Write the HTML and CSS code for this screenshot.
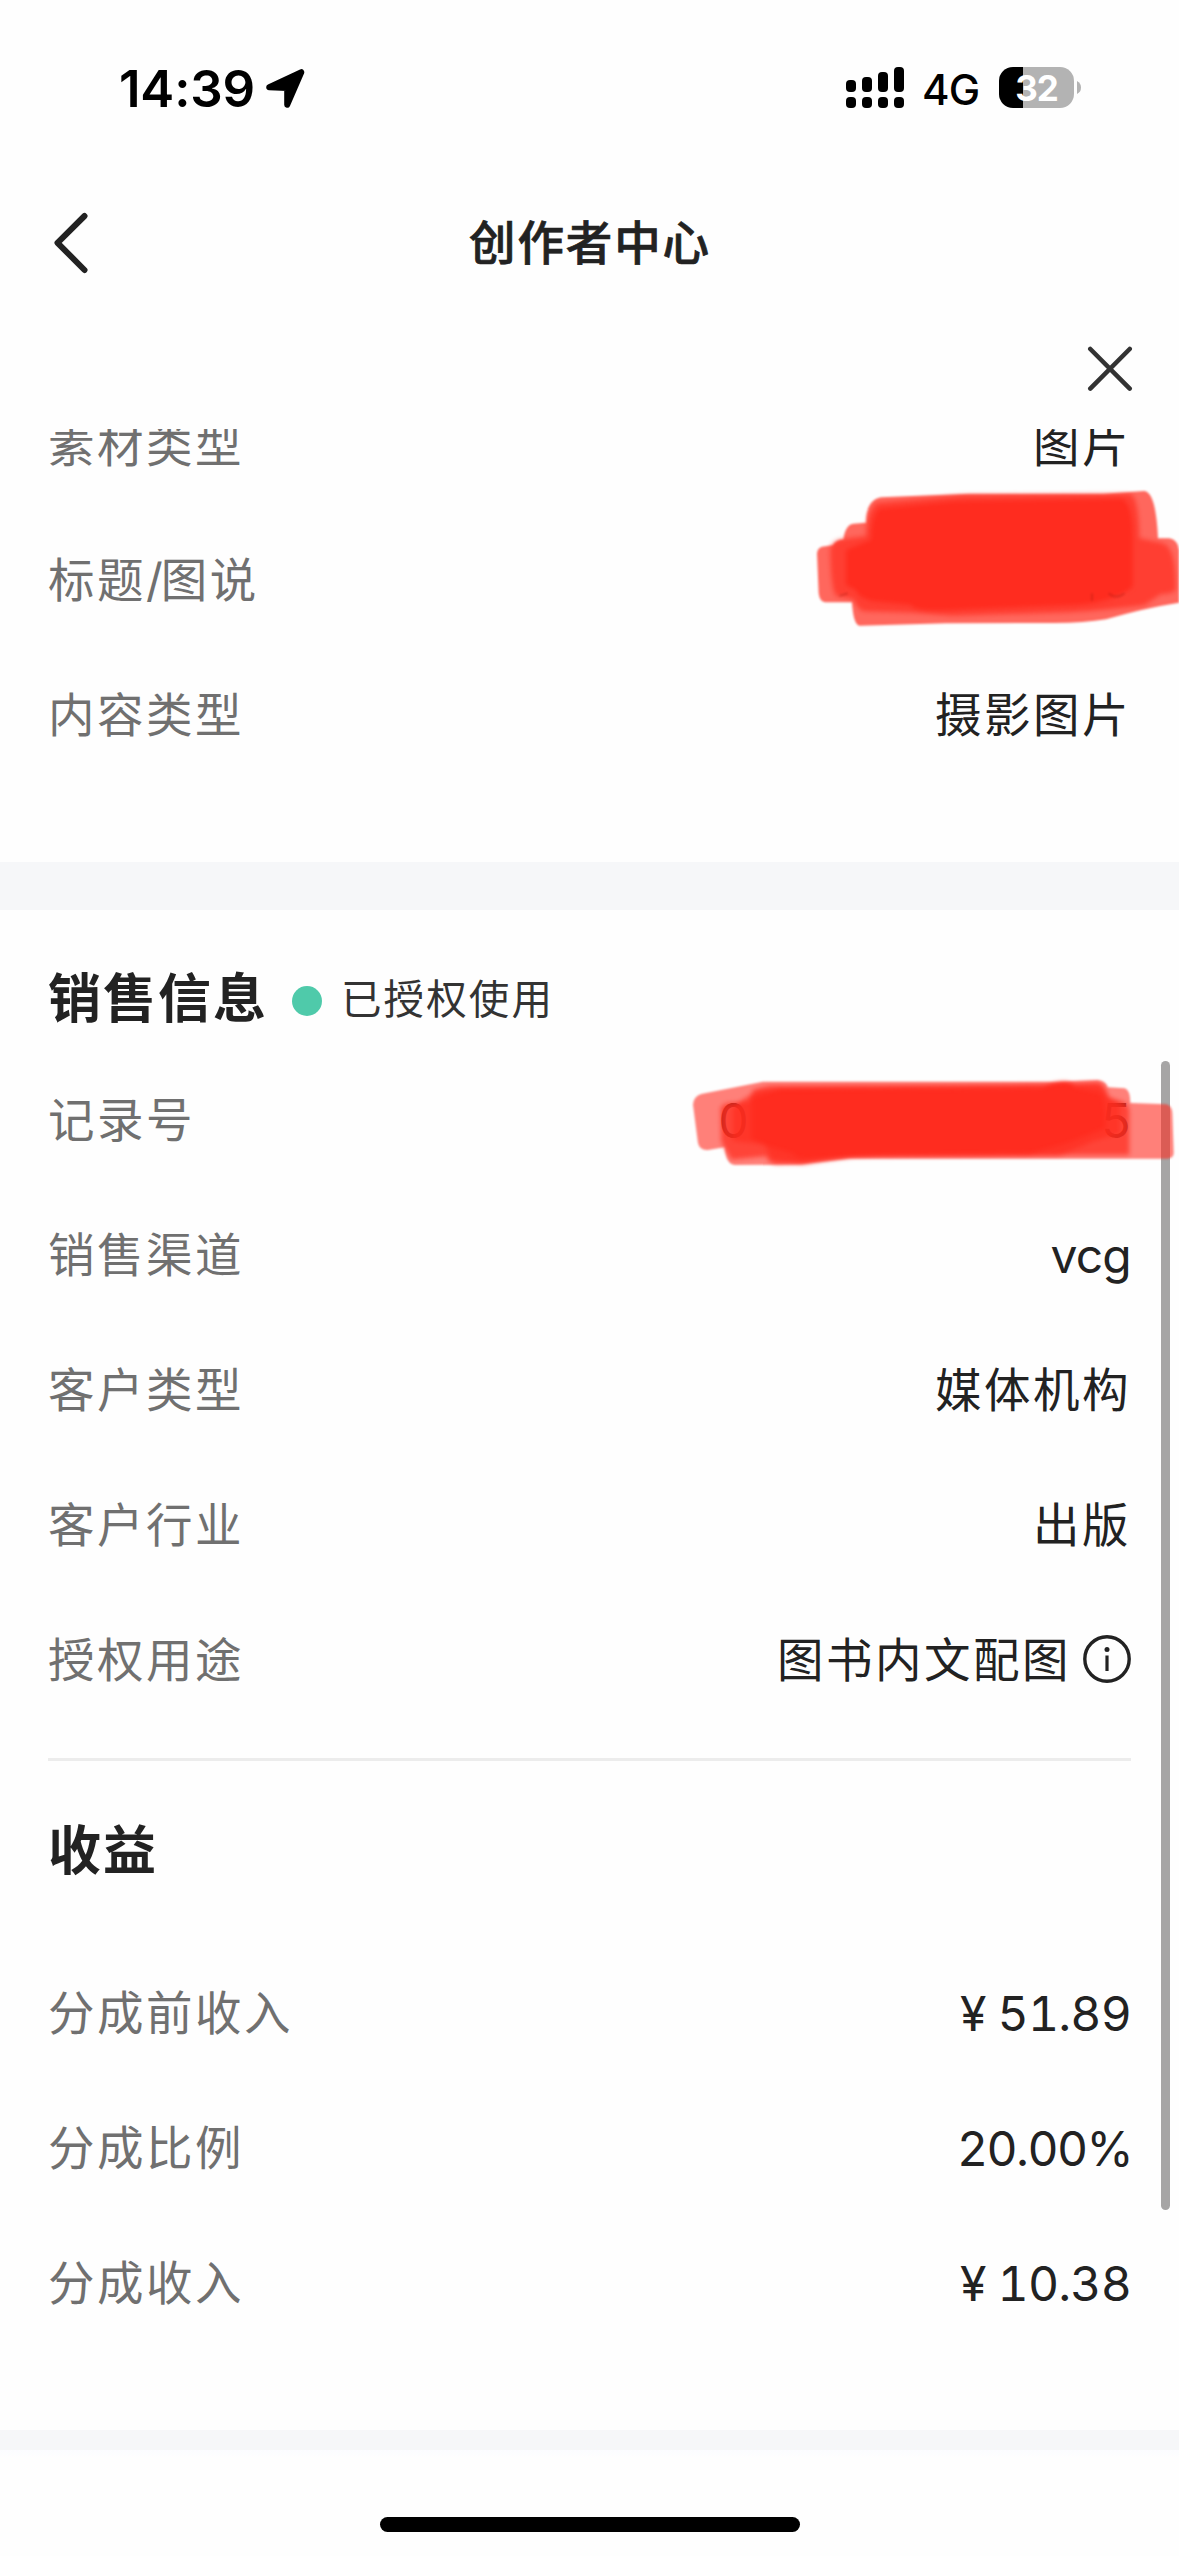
FILE: index.html
```html
<!DOCTYPE html>
<html lang="zh-CN">
<head>
<meta charset="utf-8">
<title>创作者中心</title>
<link rel="stylesheet" href="styles.css">
</head>
<body>
<div class="screen">
  <header class="status">
    <div class="status-left">
      <span class="time">14:39</span>
      <svg class="location" width="40" height="40" viewBox="0 0 40 40"><path d="M3.2 18.2 35.3 3.2 21.2 35.7V18.9Z" stroke="#000" stroke-width="6" stroke-linejoin="round"/></svg>
    </div>
    <div class="status-right">
      <svg class="signal" width="58" height="41" viewBox="0 0 58 41">
        <rect x="0" y="13" width="10" height="12" rx="4"/><rect x="16" y="10" width="10" height="15" rx="4"/><rect x="32" y="5" width="10" height="20" rx="4"/><rect x="48" y="0" width="10" height="25" rx="4"/>
        <rect x="0" y="30" width="10" height="11" rx="4"/><rect x="16" y="30" width="10" height="11" rx="4"/><rect x="32" y="30" width="10" height="11" rx="4"/><rect x="48" y="30" width="10" height="11" rx="4"/>
      </svg>
      <span class="network">4G</span>
      <div class="battery">32</div>
      <svg class="battery-cap" width="4" height="13" viewBox="0 0 4 13"><path d="M0 0Q4 2 4 6.500T0 13Z" fill="#b3b3b3"/></svg>
    </div>
  </header>

  <nav class="nav">
    <svg class="back" width="34" height="62" viewBox="0 0 34 62"><path d="M30.500 4 3.500 30.800 30.500 58" fill="none" stroke="#222" stroke-width="6" stroke-linecap="round" stroke-linejoin="round"/></svg>
    <h1 class="nav-title">创作者中心</h1>
  </nav>

  <div class="close-bar">
    <svg width="46" height="46" viewBox="0 0 46 46"><path d="M3.300 3 42.700 42.600M42.700 3 3.300 42.600" stroke="#333" stroke-width="4.600" stroke-linecap="round"/></svg>
  </div>

  <main class="content">
    <section class="material">
      <div class="row"><span class="label">素材类型</span><span class="value">图片</span></div>
      <div class="row"><span class="label">标题<span class="slash">/</span>图说</span></div>
      <div class="row"><span class="label">内容类型</span><span class="value">摄影图片</span></div>
    </section>
    <div class="band"></div>
    <section class="sales">
      <div class="sales-head">
        <h2>销售信息</h2>
        <i class="dot"></i>
        <span class="state">已授权使用</span>
      </div>
      <div class="row"><span class="label">记录号</span><span class="value num record"><span>0</span><span>5</span></span></div>
      <div class="row"><span class="label">销售渠道</span><span class="value num">vcg</span></div>
      <div class="row"><span class="label">客户类型</span><span class="value">媒体机构</span></div>
      <div class="row"><span class="label">客户行业</span><span class="value">出版</span></div>
      <div class="row"><span class="label">授权用途</span><span class="value usage">图书内文配图<svg class="info" width="48" height="48" viewBox="0 0 48 48"><circle cx="24" cy="24" r="22.200" fill="none" stroke="#222" stroke-width="3.400"/><circle cx="24" cy="14.500" r="2.500" fill="#222"/><path d="M24 20.500V36" stroke="#222" stroke-width="3.200"/></svg></span></div>
    </section>
    <section class="income">
      <h2>收益</h2>
      <div class="row"><span class="label">分成前收入</span><span class="value num">¥ 51.89</span></div>
      <div class="row"><span class="label">分成比例</span><span class="value num percent">20.00%</span></div>
      <div class="row"><span class="label">分成收入</span><span class="value num">¥ 10.38</span></div>
    </section>
    <div class="band band-last"></div>
  </main>

  <footer class="home"><div class="home-bar"></div></footer>

  <div class="scrollbar"></div>

  <svg class="marker marker-title" width="363" height="140" viewBox="0 0 1089 420">
    <g fill="#ff2c1f">
      <path opacity=".72" d="M3 190Q4 170 28 169L50 165Q60 150 82 148 88 104 112 101L150 98Q150 30 195 22L460 11 860 11 985 3Q1020 7 1026 145L1060 145Q1086 150 1089 180V338Q980 355 870 388 800 400 700 399L390 400 130 407Q112 404 108 337L28 337Q11 336 8 310Z"/>
      <path opacity=".7" class="soft" d="M43 180Q47 151 80 148L150 138Q150 70 180 38L440 16 940 12Q968 14 970 145L1040 160Q1080 170 1079 300 1068 312 1035 312L985 345Q880 360 760 367L410 377 290 368 140 364Q120 350 112 328L60 318Q44 290 43 180Z"/>
      <path class="soft" d="M90 180 165 150Q165 80 190 56L420 34 915 26Q950 34 950 145V290Q890 338 780 344L440 358Q295 368 285 344L165 332Q124 320 120 300L90 285Z"/>
    </g>
    <path d="M828 310V333M878 310Q900 330 926 310M70 318 95 310" fill="none" stroke="#a51a12" stroke-width="5" opacity=".4"/>
  </svg>

  <svg class="marker marker-record" width="482" height="90" viewBox="0 0 1446 270">
    <g fill="#ff2c1f">
      <path opacity=".6" d="M0 80Q2 55 25 48L210 11 1080 11 1215 6Q1240 10 1244 28L1295 31Q1312 36 1312 75L1420 79Q1436 82 1438 105L1442 225Q1442 240 1424 242H470L320 260 125 261Q100 260 94 208L45 216Q20 218 15 195Z"/>
      <path opacity=".72" class="soft" d="M83 95Q84 78 110 75L170 72 180 36 230 23 1080 19 1215 13Q1240 20 1246 60L1285 70Q1310 76 1309 105V231H460L330 255 250 259Q225 255 220 235L115 245 94 208 85 190Z"/>
      <path class="soft" d="M176 62 260 34 1050 32Q1075 14 1110 12 1140 14 1145 29L1220 45Q1238 60 1236 150L1120 195 1010 226 560 230 340 242Q310 242 300 226L230 205 176 182Z"/>
      <path opacity=".65" class="soft" d="M120 90 156 60 200 38 1220 22 1243 55 1280 82V166L1200 190 1100 232 480 236 330 257 235 243 215 198 120 188Z"/>
    </g>
  </svg>
</div>
</body>
</html>
```
FILE: styles.css
```css
* { box-sizing: border-box; }
body { margin: 0; background: #fff; }
h1, h2 { margin: 0; }
svg { display: block; flex: none; }

.screen {
  position: relative;
  width: 1179px;
  height: 2556px;
  overflow: hidden;
  display: flex;
  flex-direction: column;
  background: #fefefe;
  color: #222;
  font-family: Inter, "Noto Sans CJK SC", sans-serif;
}

.status {
  height: 176px;
  flex: none;
  display: flex;
  justify-content: space-between;
  padding: 0 98px 0 119px;
  color: #000;
}
.status-left, .status-right { display: flex; align-items: center; height: 41px; margin-top: 67px; }
.time { font-size: 51px; font-weight: 600; letter-spacing: -.2px; padding-top: 1px; }
.location { margin-left: 11px; margin-top: 2px; }
.network { margin-left: 18px; padding-top: 3px; font-size: 42px; font-weight: 500; letter-spacing: -.8px; width: 77px; }
.battery {
  width: 75px;
  height: 41px;
  border-radius: 14px;
  background: linear-gradient(90deg, #000 24px, #b3b3b3 24px);
  color: #fff;
  font-size: 35px;
  font-weight: 700;
  line-height: 42px;
  letter-spacing: -1px;
  text-align: center;
}
.battery-cap { margin-left: 3px; }

.nav { height: 134px; flex: none; display: flex; align-items: center; padding: 0 53px 0 54px; }
.back { margin-right: -34px; }
.nav-title { flex: 1; padding-bottom: 7px; text-align: center; font-size: 46.500px; font-weight: 500; letter-spacing: 1.900px; -webkit-text-stroke: .7px #222; }

.close-bar { height: 119px; flex: none; display: flex; justify-content: flex-end; padding: 36px 46px 0 0; }

.content { flex: none; height: 2029px; overflow: hidden; }
.material { margin-top: -51px; padding-bottom: 79px; }
.row { height: 135px; display: flex; justify-content: space-between; align-items: center; padding: 0 48px; font-size: 46.500px; letter-spacing: 2.500px; }
.label { color: #707070; padding-bottom: 8px; }
.slash { letter-spacing: -2px; }
.value { color: #222; padding-bottom: 8px; }
.num { padding-bottom: 0; font-size: 48px; letter-spacing: -.8px; font-variant-numeric: tabular-nums; }
.percent { letter-spacing: -1.600px; margin-right: -1px; }
.record { display: flex; justify-content: space-between; width: 413px; }
.usage { display: flex; align-items: center; }
.info { margin: 5px 0 0 12px; }
.band { height: 48px; background: #f6f7f9; }
.band-last { height: 28px; background: linear-gradient(#f6f7f9 20px, #fbfcff 20px, #fefefe); }

h2 { font-size: 53px; font-weight: 600; letter-spacing: 2px; line-height: 76px; }
.sales-head { display: flex; align-items: center; height: 143px; padding: 35px 48px 0; }
.dot { width: 30px; height: 30px; margin: 4px 20px 0 24px; border-radius: 50%; background: #4fcaaa; }
.state { margin-left: -1px; font-size: 40.500px; letter-spacing: 2.100px; color: #333; padding-bottom: 6px; }

.sales { padding-bottom: 30px; }
.income { padding-bottom: 79px; }
.income::before { content: ""; display: block; height: 3px; margin: 0 48px; background: #ececec; }
.income h2 { height: 185px; padding: 52px 48px 0; }

.home { flex: 1; display: flex; justify-content: center; align-items: flex-end; padding-bottom: 24px; }
.home-bar { width: 420px; height: 15px; border-radius: 8px; background: #000; }

.scrollbar { position: absolute; left: 1161px; top: 1061px; width: 9px; height: 1149px; border-radius: 5px; background: #a6a5a5; }
.marker { position: absolute; filter: blur(1px); }
.marker-title { left: 816px; top: 490px; }
.marker-record { left: 693px; top: 1078px; }
.soft { filter: blur(7px); }
```
